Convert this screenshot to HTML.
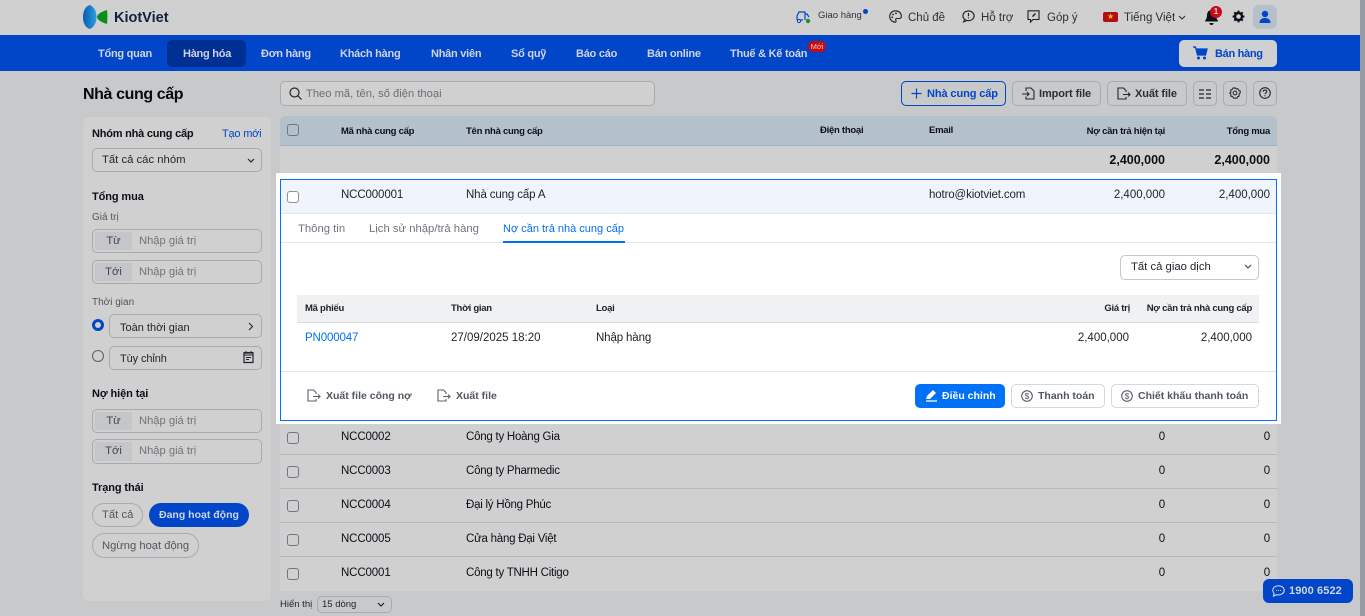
<!DOCTYPE html>
<html lang="vi"><head><meta charset="utf-8"><title>Nhà cung cấp</title>
<style>
html,body{margin:0;padding:0;width:1365px;height:616px;overflow:hidden;background:#c8c9cb}
body{position:relative;font-family:"Liberation Sans",sans-serif;font-size:12px;color:#0b0f17}
.a{position:absolute;box-sizing:border-box}
.t{position:absolute;white-space:nowrap;line-height:14px;height:14px}
.d{font-size:11.5px;letter-spacing:-.13px;transform:translateY(1px)}
.nm{letter-spacing:-.24px}
.r{text-align:right}
.b{font-weight:bold}
.n{font-weight:bold;color:#cdd5e6;font-size:11px;letter-spacing:-.25px}
.bx{position:absolute;box-sizing:border-box;border:1px solid #a9abae;border-radius:5px}
.cb{position:absolute;box-sizing:border-box;width:12px;height:12px;border:1px solid #6d7682;border-radius:3px}
.h{font-weight:bold;font-size:9.5px;letter-spacing:-.26px}
.lab{background:#c4c6c9;position:absolute;left:2px;top:2px;bottom:2px;width:37px;text-align:center;color:#40454d;line-height:19px;font-size:11.2px}
.ph{position:absolute;left:46px;top:0;line-height:22px;color:#6f747b;font-size:11.2px;white-space:nowrap}
.g{color:#51565e}
.btn{font-weight:bold;font-size:11px;letter-spacing:-.1px}
.s{font-weight:bold;font-size:11px;letter-spacing:-.1px}
svg{position:absolute;overflow:visible;fill:none}
</style></head><body>

<div class="a" style="left:0;top:0;width:1360px;height:35px;background:#d0d0d0"></div>
<div class="a" style="left:0;top:35px;width:1360px;height:36px;background:#0145c8"></div>
<div class="a" style="left:1360px;top:0;width:5px;height:616px;background:#979ca3"></div>

<!-- logo -->
<svg style="left:83px;top:5px" width="25" height="25" viewBox="0 0 25 25"><defs><linearGradient id="lg" x1="0" x2="1"><stop offset="0" stop-color="#0a5ab0"/><stop offset="1" stop-color="#2f9ee0"/></linearGradient></defs><path d="M7 0 C2.500 1 0 6 0 12 C0 18 2.500 23 7 24 C11 22 13.500 18 13.500 12 C13.500 6 11 2 7 0Z" fill="url(#lg)"/><path d="M24 5 C24.500 9 24.500 15 24 19 C20 18 14 15 14 12 C14 9 20 6 24 5Z" fill="#0a8f18"/></svg>
<div class="t b" style="left:114px;top:9px;font-size:14.5px;line-height:16px;height:16px;color:#12203a;letter-spacing:0;transform:translateY(1px)">KiotViet</div>

<!-- top right -->
<svg style="left:796px;top:9px" width="16" height="15" viewBox="0 0 16 15"><path d="M1 11V7l2-4h6v8M4 11h3M9 5h2l2 3" stroke="#0145c8" stroke-width="1.200"/><circle cx="3" cy="12" r="1.600" stroke="#0145c8"/><circle cx="12" cy="12" r="2.200" fill="#18922c"/></svg>
<div class="t" style="left:818px;top:9px;font-size:9.5px;color:#30353d">Giao hàng</div>
<div class="a" style="left:863px;top:9px;width:5px;height:5px;border-radius:50%;background:#0145c8"></div>
<svg style="left:889px;top:10px" width="13" height="13" viewBox="0 0 13 13"><path d="M6.500 .8C3 .8.700 3.300.700 6.500c0 3.200 2.600 5.700 5.300 5.700 1.500 0 1-1.500 .7-2.200-.3-1 .3-1.500 1.300-1.500h2c1.500 0 2.300-1 2.300-2.300C12.300 3 9.800.8 6.500.8z" stroke="#1c2027" stroke-width="1.100"/><circle cx="4" cy="4.500" r=".9" fill="#1c2027"/><circle cx="7" cy="3.300" r=".9" fill="#1c2027"/><circle cx="3.300" cy="7.300" r=".9" fill="#1c2027"/></svg>
<div class="t" style="left:908px;top:11px;color:#2a2e35;font-size:11.500px">Chủ đề</div>
<svg style="left:962px;top:10px" width="13" height="13" viewBox="0 0 13 13"><ellipse cx="6.500" cy="5.800" rx="5.600" ry="4.900" stroke="#1c2027" stroke-width="1.100"/><path d="M2.500 9.500 1.500 12l3-1.200" stroke="#1c2027"/><path d="M6.500 3v3.300M6.500 7.500v1" stroke="#1c2027" stroke-width="1.200"/></svg>
<div class="t" style="left:981px;top:11px;color:#2a2e35;font-size:11.500px">Hỗ trợ</div>
<svg style="left:1027px;top:10px" width="13" height="13" viewBox="0 0 13 13"><path d="M1 .8h11v8.700H6l-2.500 2.500V9.500H1z" stroke="#1c2027" stroke-width="1.100"/><path d="M5 7l.5-1.500L8 3l1 1-2.500 2.500z" fill="#1c2027"/></svg>
<div class="t" style="left:1047px;top:11px;color:#2a2e35;font-size:11.500px">Góp ý</div>
<div class="a" style="left:1103px;top:12px;width:15px;height:10px;border-radius:2px;background:#b50d12"></div>
<div class="t" style="left:1107px;top:10px;font-size:8px;color:#e6c820">★</div>
<div class="t" style="left:1124px;top:11px;color:#2a2e35;font-size:11.500px">Tiếng Việt</div>
<svg style="left:1178px;top:15px" width="8" height="5" viewBox="0 0 8 5"><path d="M1 1l3 3 3-3" stroke="#2a2e35" stroke-width="1.100"/></svg>
<svg style="left:1204px;top:9px" width="15" height="17" viewBox="0 0 15 17"><path d="M7.500 1C4.500 1 3 3.500 3 6.500 3 10 1 11 1 12.500h13C14 11 12 10 12 6.500 12 3.500 10.500 1 7.500 1z" fill="#0b0f17"/><path d="M5.500 14a2 2 0 0 0 4 0z" fill="#0b0f17"/></svg>
<div class="a" style="left:1210px;top:6px;width:12px;height:12px;border-radius:50%;background:#c80a12;color:#e9d5d5;font-size:8px;line-height:12px;text-align:center;font-weight:bold">1</div>
<svg style="left:1232px;top:10px" width="13" height="13" viewBox="0 0 13 13"><circle cx="6.500" cy="6.500" r="3.500" stroke="#0b0f17" stroke-width="2.400"/><path d="M6.500 .6v2.200M6.500 10.200v2.200M.6 6.500h2.200M10.200 6.500h2.200M2.300 2.300l1.500 1.500M9.200 9.200l1.500 1.500M10.700 2.300 9.200 3.800M3.800 9.200l-1.500 1.500" stroke="#0b0f17" stroke-width="2"/></svg>
<div class="a" style="left:1253px;top:5px;width:24px;height:24px;border-radius:6px;background:#b5c0cd"></div>
<svg style="left:1258px;top:10px" width="14" height="14" viewBox="0 0 14 14"><circle cx="7" cy="4" r="3.200" fill="#0145c8"/><path d="M1.500 13c0-3.500 2.500-5 5.500-5s5.500 1.500 5.500 5z" fill="#0145c8"/></svg>

<!-- nav -->
<div class="a" style="left:167px;top:40px;width:79px;height:27px;background:#002f94;border-radius:5px"></div>
<div class="t n" style="left:98px;top:47px">Tổng quan</div>
<div class="t n" style="left:183px;top:47px">Hàng hóa</div>
<div class="t n" style="left:261px;top:47px">Đơn hàng</div>
<div class="t n" style="left:340px;top:47px">Khách hàng</div>
<div class="t n" style="left:431px;top:47px">Nhân viên</div>
<div class="t n" style="left:511px;top:47px">Sổ quỹ</div>
<div class="t n" style="left:576px;top:47px">Báo cáo</div>
<div class="t n" style="left:647px;top:47px">Bán online</div>
<div class="t n" style="left:730px;top:47px">Thuế &amp; Kế toán</div>
<div class="a" style="left:808px;top:41px;width:18px;height:11px;border-radius:6px;background:#c80a12;color:#e6d0d0;font-size:7.500px;line-height:11px;text-align:center">Mới</div>
<div class="a" style="left:1179px;top:40px;width:98px;height:27px;border-radius:5px;background:#cfd0d2"></div>
<svg style="left:1193px;top:46px" width="15" height="14" viewBox="0 0 15 14"><path d="M0 1h2.500l2 8h8l1.500-6H3.500" fill="#0145c8" stroke="#0145c8" stroke-width="1.300"/><circle cx="5.500" cy="12" r="1.500" fill="#0145c8"/><circle cx="11.500" cy="12" r="1.500" fill="#0145c8"/></svg>
<div class="t b" style="left:1215px;top:47px;color:#0145c8;font-size:11px;letter-spacing:-.3px">Bán hàng</div>

<!-- title + search -->
<div class="t b" style="left:83px;top:86px;font-size:16px;line-height:18px;height:18px;color:#06080c;letter-spacing:-.4px">Nhà cung cấp</div>
<div class="bx" style="left:280px;top:81px;width:375px;height:25px;background:#d0d0d0"></div>
<svg style="left:289px;top:87px" width="13" height="13" viewBox="0 0 13 13"><circle cx="5.500" cy="5.500" r="4.500" stroke="#22262c" stroke-width="1.200"/><path d="M9 9l3.500 3.500" stroke="#22262c" stroke-width="1.200"/></svg>
<div class="t" style="left:306px;top:87px;color:#6a6f76;font-size:11.200px">Theo mã, tên, số điện thoại</div>

<!-- action buttons -->
<div class="bx" style="left:901px;top:81px;width:105px;height:25px;border-color:#0145c8"></div>
<svg style="left:911px;top:88px" width="11" height="11" viewBox="0 0 11 11"><path d="M5.500 .5v10M.5 5.500h10" stroke="#0145c8" stroke-width="1.200"/></svg>
<div class="t btn" style="left:927px;top:87px;color:#0145c8">Nhà cung cấp</div>
<div class="bx" style="left:1012px;top:81px;width:89px;height:25px"></div>
<svg style="left:1022px;top:87px" width="13" height="13" viewBox="0 0 13 13"><path d="M4 4V1h5l3 3v8H4V9.500" stroke="#22262c" stroke-width="1.100"/><path d="M0 7h7M5 5l2 2-2 2" stroke="#22262c" stroke-width="1.100"/></svg>
<div class="t btn" style="left:1039px;top:87px;color:#2a2e35">Import file</div>
<div class="bx" style="left:1107px;top:81px;width:80px;height:25px"></div>
<svg style="left:1117px;top:87px" width="14" height="13" viewBox="0 0 14 13"><path d="M9 5V3.500L6.500 1H1v11h8v-2" stroke="#22262c" stroke-width="1.100"/><path d="M6 7.500h7M11 5.500l2 2-2 2" stroke="#22262c" stroke-width="1.100"/></svg>
<div class="t btn" style="left:1135px;top:87px;color:#2a2e35">Xuất file</div>
<div class="bx" style="left:1193px;top:81px;width:24px;height:25px"></div>
<svg style="left:1199px;top:89px" width="12" height="10" viewBox="0 0 12 10"><path d="M0 1h5M7 1h5M0 5h5M7 5h5M0 9h5M7 9h5" stroke="#22262c" stroke-width="1.200"/></svg>
<div class="bx" style="left:1223px;top:81px;width:24px;height:25px"></div>
<svg style="left:1229px;top:87px" width="12" height="12" viewBox="0 0 12 12"><path d="M6 .7l1.200 1.300 1.800-.3.600 1.700 1.700.6-.3 1.800L11.300 6 10 7.200l.3 1.800-1.700.6L8 11.300 6.200 11 5 11.300 3.400 9.600l-1.700-.6.300-1.800L.7 6 2 4.800 1.700 3l1.700-.6L4 .9l1.800.3z" stroke="#22262c" stroke-width="1"/><circle cx="6" cy="6" r="1.900" stroke="#22262c"/></svg>
<div class="bx" style="left:1253px;top:81px;width:24px;height:25px"></div>
<svg style="left:1259px;top:87px" width="12" height="12" viewBox="0 0 12 12"><circle cx="6" cy="6" r="5.300" stroke="#22262c" stroke-width="1.100"/><path d="M4.300 4.700c0-2.200 3.500-2.200 3.500 0 0 1.200-1.800 1.300-1.800 2.500M6 8.300v1" stroke="#22262c" stroke-width="1.100"/></svg>

<!-- sidebar -->
<div class="a" style="left:83px;top:117px;width:188px;height:484px;background:#d0d0d0;border-radius:6px"></div>
<div class="t b" style="left:92px;top:127px;font-size:11px;letter-spacing:-.22px">Nhóm nhà cung cấp</div>
<div class="t" style="left:222px;top:127px;color:#0145c8;font-size:11px;letter-spacing:-.2px">Tạo mới</div>
<div class="bx" style="left:92px;top:148px;width:170px;height:24px"></div>
<div class="t" style="left:102px;top:153px;color:#22262c;font-size:11.300px">Tất cả các nhóm</div>
<svg style="left:247px;top:158px" width="8" height="5" viewBox="0 0 8 5"><path d="M1 1l3 3 3-3" stroke="#22262c" stroke-width="1.200"/></svg>
<div class="t s" style="left:92px;top:190px">Tổng mua</div>
<div class="t g" style="left:92px;top:211px;font-size:10px">Giá trị</div>
<div class="bx" style="left:92px;top:229px;width:170px;height:24px"><div class="lab">Từ</div><div class="ph">Nhập giá trị</div></div>
<div class="bx" style="left:92px;top:260px;width:170px;height:24px"><div class="lab">Tới</div><div class="ph">Nhập giá trị</div></div>
<div class="t g" style="left:92px;top:296px;font-size:10px">Thời gian</div>
<div class="a" style="left:92px;top:319px;width:12px;height:12px;border-radius:50%;border:3.500px solid #0145c8;background:#d0d0d0"></div>
<div class="bx" style="left:109px;top:314px;width:153px;height:24px"></div>
<div class="t" style="left:120px;top:321px;color:#1f232a;font-size:11px">Toàn thời gian</div>
<svg style="left:248px;top:322px" width="6" height="9" viewBox="0 0 6 9"><path d="M1 1l3.500 3.500L1 8" stroke="#22262c" stroke-width="1.100"/></svg>
<div class="a" style="left:92px;top:350px;width:12px;height:12px;border-radius:50%;border:1px solid #5c6168"></div>
<div class="bx" style="left:109px;top:346px;width:153px;height:24px"></div>
<div class="t" style="left:120px;top:352px;color:#1f232a;font-size:11px;letter-spacing:-.1px">Tùy chỉnh</div>
<svg style="left:243px;top:351px" width="11" height="12" viewBox="0 0 11 12"><path d="M1 2h9v9.500H1z" stroke="#22262c" stroke-width="1.200"/><path d="M1 1.500h9V4H1zM3 0v2M8 0v2M3 6.500h5M3 8.500h3" stroke="#22262c"/></svg>
<div class="t s" style="left:92px;top:387px">Nợ hiện tại</div>
<div class="bx" style="left:92px;top:409px;width:170px;height:24px"><div class="lab">Từ</div><div class="ph">Nhập giá trị</div></div>
<div class="bx" style="left:92px;top:439px;width:170px;height:25px"><div class="lab">Tới</div><div class="ph">Nhập giá trị</div></div>
<div class="t s" style="left:92px;top:481px">Trạng thái</div>
<div class="bx" style="left:92px;top:503px;width:51px;height:24px;border-radius:12px"></div>
<div class="t g" style="left:102px;top:508px;font-size:11.300px">Tất cả</div>
<div class="a" style="left:149px;top:503px;width:100px;height:24px;border-radius:12px;background:#0145c8"></div>
<div class="t b" style="left:159px;top:508px;color:#cdd5e6;font-size:10.500px">Đang hoạt động</div>
<div class="bx" style="left:92px;top:533px;width:107px;height:25px;border-radius:12.500px"></div>
<div class="t g" style="left:102px;top:539px;font-size:11.200px">Ngừng hoạt động</div>

<!-- table -->
<div class="a" style="left:280px;top:116px;width:997px;height:30px;background:#b5c0cd;border-bottom:1px solid #9fb0c8;border-radius:5px 5px 0 0"></div>
<div class="cb" style="left:287px;top:124px;background:#b5c0cd"></div>
<div class="t h" style="left:341px;top:125px">Mã nhà cung cấp</div>
<div class="t h" style="left:466px;top:125px">Tên nhà cung cấp</div>
<div class="t h" style="left:820px;top:124px">Điện thoại</div>
<div class="t h" style="left:929px;top:124px">Email</div>
<div class="t h r" style="right:200px;top:125px">Nợ cần trả hiện tại</div>
<div class="t h r" style="right:95px;top:125px">Tổng mua</div>
<div class="a" style="left:280px;top:146px;width:997px;height:445px;background:#d0d0d0"></div>
<div class="t b r" style="right:200px;top:153px;font-size:12.500px">2,400,000</div>
<div class="t b r" style="right:95px;top:153px;font-size:12.500px">2,400,000</div>

<!-- rows below -->
<div class="a" style="left:280px;top:454px;width:997px;height:1px;background:#b9babc"></div>
<div class="a" style="left:280px;top:488px;width:997px;height:1px;background:#b9babc"></div>
<div class="a" style="left:280px;top:522px;width:997px;height:1px;background:#b9babc"></div>
<div class="a" style="left:280px;top:556px;width:997px;height:1px;background:#b9babc"></div>

<div class="cb" style="left:287px;top:432px"></div><div class="t d" style="left:341px;top:429px">NCC0002</div><div class="t d nm" style="left:466px;top:429px">Công ty Hoàng Gia</div><div class="t d r" style="right:200px;top:429px">0</div><div class="t d r" style="right:95px;top:429px">0</div>
<div class="cb" style="left:287px;top:466px"></div><div class="t d" style="left:341px;top:463px">NCC0003</div><div class="t d nm" style="left:466px;top:463px">Công ty Pharmedic</div><div class="t d r" style="right:200px;top:463px">0</div><div class="t d r" style="right:95px;top:463px">0</div>
<div class="cb" style="left:287px;top:500px"></div><div class="t d" style="left:341px;top:497px">NCC0004</div><div class="t d nm" style="left:466px;top:497px">Đại lý Hồng Phúc</div><div class="t d r" style="right:200px;top:497px">0</div><div class="t d r" style="right:95px;top:497px">0</div>
<div class="cb" style="left:287px;top:534px"></div><div class="t d" style="left:341px;top:531px">NCC0005</div><div class="t d nm" style="left:466px;top:531px">Cửa hàng Đại Việt</div><div class="t d r" style="right:200px;top:531px">0</div><div class="t d r" style="right:95px;top:531px">0</div>
<div class="cb" style="left:287px;top:568px"></div><div class="t d" style="left:341px;top:565px">NCC0001</div><div class="t d nm" style="left:466px;top:565px">Công ty TNHH Citigo</div><div class="t d r" style="right:200px;top:565px">0</div><div class="t d r" style="right:95px;top:565px">0</div>

<!-- expanded panel -->
<div class="a" style="left:276px;top:173px;width:1005px;height:251px;background:#fff"></div>
<div class="a" style="left:280px;top:179px;width:997px;height:242px;border:1px solid #0070f4"></div>
<div class="a" style="left:281px;top:180px;width:995px;height:34px;background:#f0f5fd;border-bottom:1px solid #e4e7eb"></div>
<div class="cb" style="left:287px;top:191px;background:#fff;border-color:#8a929c"></div>
<div class="t d" style="left:341px;top:187px;color:#1d2129">NCC000001</div>
<div class="t d" style="left:466px;top:187px;color:#1d2129">Nhà cung cấp A</div>
<div class="t d" style="left:929px;top:187px;color:#1d2129">hotro@kiotviet.com</div>
<div class="t d r" style="right:200px;top:187px;color:#1d2129;letter-spacing:0">2,400,000</div>
<div class="t d r" style="right:95px;top:187px;color:#1d2129;letter-spacing:0">2,400,000</div>

<div class="t" style="left:298px;top:222px;color:#6f757e;font-size:11.300px">Thông tin</div>
<div class="t" style="left:369px;top:222px;color:#6f757e;font-size:11.300px">Lịch sử nhập/trả hàng</div>
<div class="t" style="left:503px;top:222px;color:#0070f4;font-size:11px">Nợ cần trả nhà cung cấp</div>
<div class="a" style="left:281px;top:242px;width:995px;height:1px;background:#e4e7eb"></div>
<div class="a" style="left:503px;top:241px;width:122px;height:2px;background:#0070f4"></div>

<div class="a" style="left:1120px;top:255px;width:139px;height:25px;border:1px solid #c4c7cb;border-radius:5px"></div>
<div class="t" style="left:1131px;top:260px;color:#1d2129;font-size:11.300px">Tất cả giao dịch</div>
<svg style="left:1244px;top:264px" width="8" height="5" viewBox="0 0 8 5"><path d="M1 1l3 3 3-3" stroke="#3a3f47" stroke-width="1.100"/></svg>

<div class="a" style="left:297px;top:295px;width:962px;height:28px;background:#eff1f3;border-bottom:1px solid #d8dbe0"></div>
<div class="t h" style="left:305px;top:302px;color:#1d2129">Mã phiếu</div>
<div class="t h" style="left:451px;top:302px;color:#1d2129">Thời gian</div>
<div class="t h" style="left:596px;top:302px;color:#1d2129">Loại</div>
<div class="t h r" style="right:235px;top:302px;color:#1d2129">Giá trị</div>
<div class="t h r" style="right:113px;top:302px;color:#1d2129">Nợ cần trả nhà cung cấp</div>
<div class="t d" style="left:305px;top:330px;color:#0070f4">PN000047</div>
<div class="t d" style="left:451px;top:330px;color:#1d2129;letter-spacing:0">27/09/2025 18:20</div>
<div class="t d" style="left:596px;top:330px;color:#1d2129">Nhập hàng</div>
<div class="t d r" style="right:236px;top:330px;color:#1d2129;letter-spacing:0">2,400,000</div>
<div class="t d r" style="right:113px;top:330px;color:#1d2129;letter-spacing:0">2,400,000</div>
<div class="a" style="left:281px;top:371px;width:995px;height:1px;background:#e4e7eb"></div>

<svg style="left:307px;top:389px" width="14" height="13" viewBox="0 0 14 13"><path d="M9 5V3.500L6.500 1H1v11h8v-2" stroke="#5a616b" stroke-width="1.100"/><path d="M6 7.500h7M11 5.500l2 2-2 2" stroke="#5a616b" stroke-width="1.100"/></svg>
<div class="t b" style="left:326px;top:389px;color:#51575f;font-size:10.500px">Xuất file công nợ</div>
<svg style="left:437px;top:389px" width="14" height="13" viewBox="0 0 14 13"><path d="M9 5V3.500L6.500 1H1v11h8v-2" stroke="#5a616b" stroke-width="1.100"/><path d="M6 7.500h7M11 5.500l2 2-2 2" stroke="#5a616b" stroke-width="1.100"/></svg>
<div class="t b" style="left:456px;top:389px;color:#51575f;font-size:10.500px">Xuất file</div>

<div class="a" style="left:915px;top:384px;width:90px;height:24px;border-radius:5px;background:#0070f4"></div>
<svg style="left:925px;top:389px" width="13" height="13" viewBox="0 0 13 13"><path d="M1 10l1-3 6-6 3 3-6 6z" fill="#fff"/><path d="M1 12h11" stroke="#fff" stroke-width="1.300"/></svg>
<div class="t b" style="left:942px;top:389px;color:#fff;font-size:10.500px">Điều chỉnh</div>
<div class="a" style="left:1011px;top:384px;width:94px;height:24px;border:1px solid #d5d8dc;border-radius:5px"></div>
<svg style="left:1021px;top:390px" width="13" height="13" viewBox="0 0 13 13"><circle cx="6" cy="6" r="5.300" stroke="#4a5058" stroke-width="1"/><text x="6" y="9" font-size="8" text-anchor="middle" fill="#4a5058" font-family="Liberation Sans">$</text></svg>
<div class="t b" style="left:1038px;top:389px;color:#51575f;font-size:10.500px">Thanh toán</div>
<div class="a" style="left:1111px;top:384px;width:148px;height:24px;border:1px solid #d5d8dc;border-radius:5px"></div>
<svg style="left:1121px;top:390px" width="13" height="13" viewBox="0 0 13 13"><circle cx="6" cy="6" r="5.300" stroke="#4a5058" stroke-width="1"/><text x="6" y="9" font-size="8" text-anchor="middle" fill="#4a5058" font-family="Liberation Sans">$</text></svg>
<div class="t b" style="left:1138px;top:389px;color:#51575f;font-size:10.500px">Chiết khấu thanh toán</div>

<!-- footer -->
<div class="t" style="left:280px;top:598px;font-size:9.500px;color:#1f232a">Hiển thị</div>
<div class="a" style="left:317px;top:596px;width:75px;height:17px;border:1px solid #a9abae;border-radius:5px"></div>
<div class="t" style="left:322px;top:598px;font-size:9.500px;color:#1f232a">15 dòng</div>
<svg style="left:377px;top:602px" width="8" height="5" viewBox="0 0 8 5"><path d="M1 1l3 3 3-3" stroke="#22262c" stroke-width="1.200"/></svg>
<div class="a" style="left:1263px;top:579px;width:90px;height:24px;border-radius:6px;background:#0145c8"></div>
<svg style="left:1272px;top:585px" width="13" height="12" viewBox="0 0 13 12"><path d="M6.500 .8C3.200.8.800 2.800.800 5.400c0 1.200.5 2.200 1.300 3L1.500 11l3-1.300c.6.100 1.300.2 2 .2 3.300 0 5.700-2 5.700-4.500S9.800.8 6.500.8z" stroke="#cdd5e6" stroke-width="1.100"/><path d="M4 5.400h1M6 5.400h1M8 5.400h1" stroke="#cdd5e6"/></svg>
<div class="t b" style="left:1289px;top:584px;color:#cdd5e6;font-size:11px;letter-spacing:.1px">1900 6522</div>
</body></html>
